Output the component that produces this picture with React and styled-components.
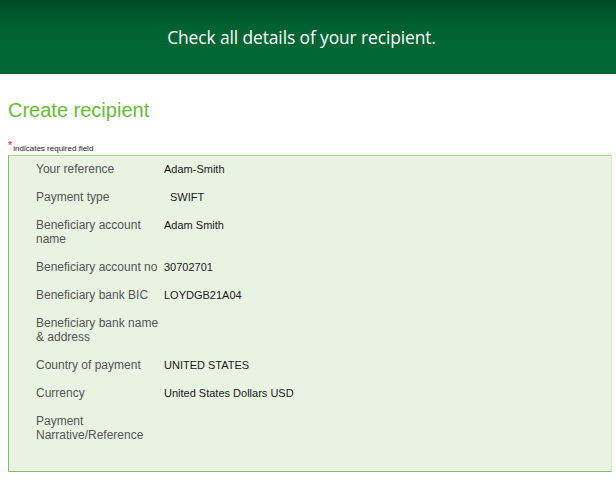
import styled, { createGlobalStyle } from "styled-components";

const GlobalStyle = createGlobalStyle`
  html, body {
    margin: 0;
    padding: 0;
    background: #ffffff;
  }
`;

const rows = [
  { label: "Your reference", value: "Adam-Smith" },
  { label: "Payment type", value: "SWIFT", indent: true },
  { label: "Beneficiary account name", value: "Adam Smith" },
  { label: "Beneficiary account no", value: "30702701" },
  { label: "Beneficiary bank BIC", value: "LOYDGB21A04" },
  { label: "Beneficiary bank name & address", value: "" },
  { label: "Country of payment", value: "UNITED STATES" },
  { label: "Currency", value: "United States Dollars USD" },
  { label: "Payment Narrative/Reference", value: "" },
];

export default function App() {
  return (
    <Page>
      <GlobalStyle />
      <Banner>
        <h2>Check all details of your recipient.</h2>
      </Banner>
      <Content>
        <Title>Create recipient</Title>
        <Required>
          <span>*</span>indicates required field
        </Required>
        <DetailsBox>
          {rows.map((row) => (
            <Row key={row.label}>
              <Label>{row.label}</Label>
              <Value indent={row.indent}>{row.value}</Value>
            </Row>
          ))}
        </DetailsBox>
      </Content>
    </Page>
  );
}

const Page = styled.div`
  width: 616px;
  height: 480px;
  overflow: hidden;
  font-family: "Liberation Sans", Arial, sans-serif;
`;

const Banner = styled.div`
  height: 74px;
  background: linear-gradient(to bottom, #004a24 0px, #005f2f 22px, #006633 40px, #006633 100%);
  display: flex;
  align-items: center;
  justify-content: center;
  padding-right: 13px;

  h2 {
    margin: 0;
    padding-bottom: 1px;
    font-family: "Open Sans", sans-serif;
    font-weight: 400;
    font-size: 17.4px;
    color: #ffffff;
    letter-spacing: -0.1px;
  }
`;

const Content = styled.div`
  padding: 0 4px 0 8px;
`;

const Title = styled.h1`
  margin: 23px 0 0;
  font-family: "Liberation Sans", Arial, sans-serif;
  font-weight: 400;
  font-size: 20px;
  line-height: 26px;
  color: #66bb33;
`;

const Required = styled.div`
  margin-top: 16px;
  font-size: 8px;
  line-height: 12px;
  color: #222222;

  span {
    color: #dd2222;
    font-size: 11px;
    vertical-align: 2px;
    margin-right: 1px;
  }
`;

const DetailsBox = styled.div`
  box-sizing: border-box;
  height: 317px;
  background: #e8f3e2;
  border: 1px solid #7cc25a;
  border-top-color: #a8d693;
  border-right-color: #d6ebcb;
  padding: 6px 0 0 27px;
  display: flex;
  flex-direction: column;
  gap: 14px;
`;

const Row = styled.div`
  display: flex;
  align-items: baseline;
  font-size: 12px;
  line-height: 14px;
`;

const Label = styled.div`
  width: 128px;
  flex-shrink: 0;
  color: #555555;
`;

const Value = styled.div`
  font-size: 11px;
  color: #1a1a1a;
  padding-left: ${(p) => (p.indent ? "6px" : "0")};
`;
